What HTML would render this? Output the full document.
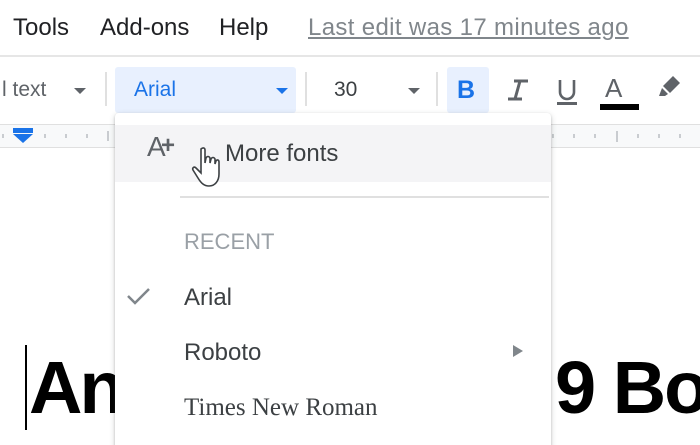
<!DOCTYPE html>
<html><head><style>
*{margin:0;padding:0;box-sizing:border-box}
html,body{width:700px;height:445px;overflow:hidden}
body{background:#fff;font-family:"Liberation Sans",sans-serif;position:relative}
.a{position:absolute;white-space:nowrap}
#wrap{position:absolute;left:0;top:0;width:700px;height:445px;overflow:hidden}
</style></head><body><div id="wrap">
<!-- menu bar -->
<div class="a" style="left:13px;top:14px;font-size:24px;color:#202124">Tools</div>
<div class="a" style="left:100px;top:14px;font-size:24px;color:#202124">Add-ons</div>
<div class="a" style="left:219px;top:14px;font-size:24px;color:#202124">Help</div>
<div class="a" style="left:308px;top:14px;font-size:24px;letter-spacing:0.35px;color:#80868b;text-decoration:underline">Last edit was 17 minutes ago</div>
<div class="a" style="left:0;top:55px;width:700px;height:2px;background:#e6e6e6"></div>
<!-- toolbar -->
<div class="a" style="left:2px;top:78px;font-size:21px;color:#5f6368">l text</div>
<div class="a" style="left:74px;top:88px;border:6px solid transparent;border-top:6px solid #5f6368"></div>
<div class="a" style="left:105px;top:72px;width:2px;height:34px;background:#e0e0e0"></div>
<div class="a" style="left:115px;top:67px;width:181px;height:46px;background:#e8f0fe;border-radius:3px"></div>
<div class="a" style="left:134px;top:78px;font-size:21px;color:#1a73e8">Arial</div>
<div class="a" style="left:276px;top:88px;border:6px solid transparent;border-top:6px solid #1a73e8"></div>
<div class="a" style="left:305px;top:72px;width:2px;height:34px;background:#e0e0e0"></div>
<div class="a" style="left:334px;top:78px;font-size:21px;color:#3c4043">30</div>
<div class="a" style="left:408px;top:88px;border:6px solid transparent;border-top:6px solid #5f6368"></div>
<div class="a" style="left:436px;top:72px;width:2px;height:34px;background:#e0e0e0"></div>
<div class="a" style="left:447px;top:67px;width:42px;height:46px;background:#e8f0fe;border-radius:3px"></div>
<div class="a" style="left:457px;top:76px;font-size:25px;font-weight:bold;color:#1a73e8">B</div>
<svg class="a" style="left:505px;top:78px" width="26" height="26" viewBox="0 0 26 26"><path d="M9 3 H23 M3 21 H17 M15 3 L10 21" stroke="#5f6368" stroke-width="3" fill="none"/></svg>
<svg class="a" style="left:555px;top:78px" width="26" height="30" viewBox="0 0 26 30"><path d="M5 2 V14 A7 7 0 0 0 19 14 V2" stroke="#5f6368" stroke-width="2.6" fill="none"/><rect x="2" y="24" width="20" height="3" fill="#5f6368"/></svg>
<div class="a" style="left:605px;top:73px;font-size:26px;color:#5f6368">A</div>
<div class="a" style="left:600px;top:104px;width:39px;height:6px;background:#000"></div>
<svg class="a" style="left:655px;top:72px" width="32" height="30" viewBox="0 0 32 30"><path d="M18 4 L25 11 L15 21 L8 14 Z" fill="#5f6368"/><path d="M7 16 L13 22 L10 24 L4 24 Z" fill="#5f6368"/></svg>
<!-- ruler -->
<div class="a" style="left:0;top:124px;width:700px;height:24px;background:#f8f9fa;border-top:1px solid #e0e0e0;border-bottom:1px solid #e0e0e0"></div>
<div class="a" style="left:13px;top:128px;width:20px;height:5px;background:#1a73e8"></div>
<div class="a" style="left:13px;top:134px;border-left:10px solid transparent;border-right:10px solid transparent;border-top:9px solid #1a73e8"></div>
<svg class="a" style="left:0;top:128px" width="700" height="16">
<g stroke="#9aa0a6" stroke-width="1">
<line x1="3" y1="6" x2="3" y2="10"/><line x1="45" y1="6" x2="45" y2="10"/><line x1="66" y1="6" x2="66" y2="10"/><line x1="87" y1="6" x2="87" y2="10"/><line x1="108" y1="3" x2="108" y2="13"/>
<line x1="553" y1="6" x2="553" y2="10"/><line x1="574" y1="6" x2="574" y2="10"/><line x1="595" y1="6" x2="595" y2="10"/><line x1="617" y1="3" x2="617" y2="14"/><line x1="638" y1="6" x2="638" y2="10"/><line x1="659" y1="6" x2="659" y2="10"/><line x1="680" y1="6" x2="680" y2="10"/>
</g></svg>
<!-- document text -->
<div class="a" style="left:25px;top:345px;width:2px;height:85px;background:#000"></div>
<div class="a" style="left:29px;top:345px;font-size:74px;font-weight:bold;color:#000;letter-spacing:-3px">An</div>
<div class="a" style="left:555px;top:345px;font-size:74px;font-weight:bold;color:#000;letter-spacing:-2px">9 Boo</div>
<!-- dropdown -->
<div class="a" style="left:115px;top:113px;width:436px;height:340px;background:#fff;border-radius:4px;box-shadow:0 2px 6px rgba(60,64,67,.25),0 1px 2px rgba(60,64,67,.2)"></div>
<div class="a" style="left:115px;top:125px;width:436px;height:57px;background:#f4f4f6"></div>
<div class="a" style="left:147px;top:131px;font-size:28px;color:#5f6368">A</div>
<div class="a" style="left:161px;top:132px;font-size:24px;font-weight:bold;color:#5f6368">+</div>
<div class="a" style="left:225px;top:140px;font-size:24px;color:#3c4043">More fonts</div>
<svg class="a" style="left:190px;top:146px" width="36" height="44" viewBox="0 0 36 44"><path d="M11 3 C13 1 15 2 15 4 L15 17 L16 12 C17 10 19 10 20 12 L20 17 L21 13 C22 11 24 11 25 13 L25 18 L26 15 C27 13 29 14 29 16 L29 28 C29 35 25 40 19 40 C14 40 11 37 8 32 L3 24 C2 22 4 20 6 22 L11 27 Z" fill="#fff" stroke="#3c4043" stroke-width="1.6"/></svg>
<div class="a" style="left:180px;top:196px;width:369px;height:2px;background:#e0e0e0"></div>
<div class="a" style="left:184px;top:229px;font-size:22px;color:#9aa0a6">RECENT</div>
<svg class="a" style="left:126px;top:286px" width="26" height="20" viewBox="0 0 26 20"><path d="M2 10 L9 17 L23 3" fill="none" stroke="#80868b" stroke-width="2.5"/></svg>
<div class="a" style="left:184px;top:284px;font-size:24px;color:#3c4043">Arial</div>
<div class="a" style="left:184px;top:339px;font-size:24px;color:#3c4043">Roboto</div>
<div class="a" style="left:513px;top:345px;border-top:6px solid transparent;border-bottom:6px solid transparent;border-left:10px solid #80868b"></div>
<div class="a" style="left:184px;top:394px;font-size:25px;color:#3c4043;font-family:'Liberation Serif',serif">Times New Roman</div>
</div></body></html>
